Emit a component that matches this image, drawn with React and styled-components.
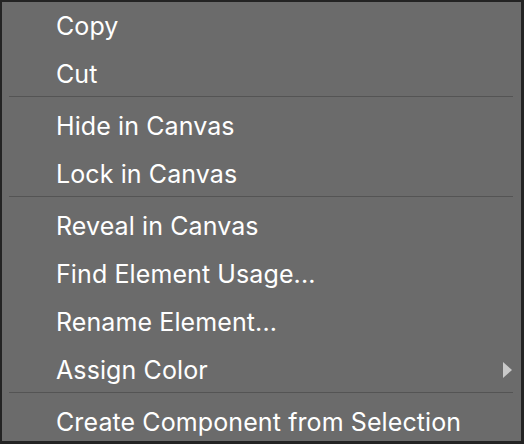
import styled, { createGlobalStyle } from 'styled-components'

const GlobalStyle = createGlobalStyle`
  html, body {
    margin: 0;
    padding: 0;
    background: #232323;
  }
`

const sections = [
  ['Copy', 'Cut'],
  ['Hide in Canvas', 'Lock in Canvas'],
  ['Reveal in Canvas', 'Find Element Usage...', 'Rename Element...', { label: 'Assign Color', submenu: true }],
  ['Create Component from Selection'],
]

const App = () => {
  return (
    <>
      <GlobalStyle />
      <Menu>
        {sections.map((items, i) => (
          <Section key={i} $first={i === 0}>
            {items.map((item) => {
              const label = typeof item === 'string' ? item : item.label
              return (
                <Item key={label}>
                  <span>{label}</span>
                  {item.submenu && <Chevron />}
                </Item>
              )
            })}
          </Section>
        ))}
      </Menu>
    </>
  )
}

const Menu = styled.div`
  box-sizing: border-box;
  width: 524px;
  height: 444px;
  background: #6b6b6b;
  border: 2px solid #232323;
  border-right-width: 3px;
  border-bottom-width: 3px;
  display: flex;
  flex-direction: column;
  overflow: hidden;
  font-family: Inter, "Liberation Sans", sans-serif;
`

// the first group is pulled up under the top edge, the others start with a rule
const Section = styled.div`
  display: flex;
  flex-direction: column;
  margin: ${({ $first }) => ($first ? '-2px' : '0')} 8px 0 7px;
  padding-top: ${({ $first }) => ($first ? '0' : '3px')};
  border-top: ${({ $first }) => ($first ? 'none' : '1px solid #545454')};
`

const Item = styled.div`
  box-sizing: border-box;
  flex-shrink: 0;
  height: 48px;
  display: flex;
  align-items: center;
  justify-content: space-between;
  padding: 3px 1px 0 47px;
  color: #ffffff;
  font-size: 25px;
  letter-spacing: 0.1px;
`

const Chevron = styled.span`
  width: 0;
  height: 0;
  border-top: 8px solid transparent;
  border-bottom: 8px solid transparent;
  border-left: 9px solid #c9c9c9;
`

export default App
